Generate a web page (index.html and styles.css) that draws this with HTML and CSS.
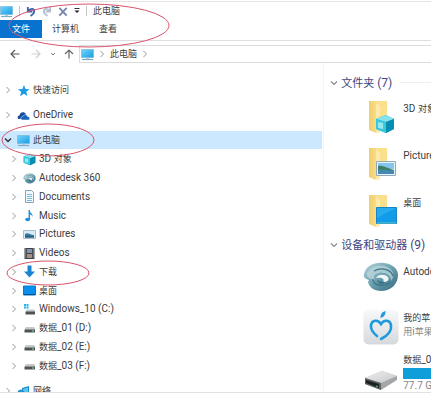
FILE: index.html
```
<!DOCTYPE html>
<html lang="zh-CN">
<head>
<meta charset="utf-8">
<title>此电脑</title>
<link rel="stylesheet" href="styles.css">
</head>
<body>
<svg class="defs" aria-hidden="true">
  <defs>
    <linearGradient id="screen" x1="0" y1="0" x2="1" y2="1"><stop offset="0" stop-color="#75d4fb"/><stop offset="1" stop-color="#149ee6"/></linearGradient>
    <linearGradient id="fold" x1="0" y1="0" x2="1" y2="0"><stop offset="0" stop-color="#f1cd69"/><stop offset="1" stop-color="#fbe398"/></linearGradient>
    <linearGradient id="swirl" x1="0" y1="0" x2="1" y2="1"><stop offset="0" stop-color="#b9d5dc"/><stop offset=".5" stop-color="#6a9fae"/><stop offset="1" stop-color="#316b80"/></linearGradient>
    <linearGradient id="metal" x1="0" y1="0" x2="1" y2="1"><stop offset="0" stop-color="#f0f0f0"/><stop offset="1" stop-color="#c4c6c7"/></linearGradient>
    <linearGradient id="plate" x1="0" y1="0" x2="0" y2="1"><stop offset="0" stop-color="#f8f9fa"/><stop offset="1" stop-color="#d6d9dc"/></linearGradient>
    <symbol id="chev" viewBox="0 0 6 8"><path d="M1.500 1 4.500 4l-3 3" fill="none" stroke="currentColor"/></symbol>
    <symbol id="down" viewBox="0 0 8 6"><path d="M1 1.500 4 4.500l3-3" fill="none" stroke="currentColor" stroke-width="1.200"/></symbol>
    <symbol id="pc" viewBox="0 0 13 13"><path d="M.5 1.500h12v8H.5z" fill="url(#screen)" stroke="#79b8d8" stroke-width=".7"/><path d="M1 11.500h11" stroke="#7fa9bf" stroke-width="1.200"/><path d="M5 10h3v1H5z" fill="#bcd"/></symbol>
    <symbol id="cube" viewBox="0 0 20 20"><path d="m1 5 10-4 8 4v10l-8 4-10-4z" fill="#17aecb"/><path d="m1 5 10-4 8 4-8 3z" fill="#86e3ee"/><path d="m1 5 10 3v11L1 15z" fill="#38c9dc"/><path d="m11 8 8-3v10l-8 4z" fill="#078eb4"/><path d="m3 8 5 1v6l-5-1z" fill="#b8f2f6" opacity=".75"/></symbol>
    <symbol id="orbit" viewBox="0 0 36 30"><path d="M1 12C3 3 12 0 21 1c9 1 14 6 14 12 0 9-7 16-17 16-7 0-12-4-13-9l1-2c-4-1-6-3-5-6z" fill="url(#swirl)"/><path d="M4 11C8 4 17 2 24 5c7 3 8 9 4 14 0-6-6-9-12-8-5 1-6 4-4 7-5-1-9-3-8-7z" fill="#c5dce1" opacity=".65"/><path d="M13 16c2-4 9-4 12-1 2 3-1 5-5 5 2-3-1-5-7-4z" fill="#f0f6f7"/><path d="M10 17c0 6 9 9 18 3M11 9c7-4 17-2 19 5" fill="none" stroke="#3c7588" stroke-width="1.300"/><path d="M14 18c3 2 6 1 8 2-1 3-7 3-8-2z" fill="#3c7588"/></symbol>
    <symbol id="drive" viewBox="0 0 13 13"><path d="m2 6 1-1h8l1 1v2H2z" fill="#c7c9c9"/><path d="M1.500 7.500h10.500v3H1.500z" fill="#4c5454"/><path d="M9 9h2" stroke="#85d897"/></symbol>
    <symbol id="folder" viewBox="0 0 26 36"><path d="M7 1h12v28H7z" fill="#fae08c"/><path d="M1 1h6l5 5v26l-4 1-7-3z" fill="url(#fold)"/><path d="m8 3 4 3v26l-4 1z" fill="#fff0b5" opacity=".7"/></symbol>
  </defs>
</svg>
<div class="window">
  <header class="title">
    <svg class="icon"><use href="#pc"/></svg>
    <span class="rule"></span>
    <button class="tool" aria-label="撤消"><svg viewBox="0 0 11 12"><path d="M2 1v5h5M2.500 5.500C5 2 9 2.500 9 6c0 2-2 3.500-4 5" fill="none" stroke="#3565ad" stroke-width="2"/></svg></button>
    <button class="tool" aria-label="恢复"><svg viewBox="0 0 11 12"><path d="M9 1v5H4M8.500 5.500C6 2 2 2.500 2 6c0 2 2 3.500 4 5" fill="none" stroke="#b3bfd0" stroke-width="2"/></svg></button>
    <button class="tool" aria-label="删除"><svg viewBox="0 0 11 12"><path d="m1.500 2 8 8.500m0-8.500-8 8.500" fill="none" stroke="#7485ac" stroke-width="2"/></svg></button>
    <button class="more" aria-label="自定义"><svg viewBox="0 0 6 6"><path d="M.5.5h5" stroke="#333"/><path d="M.5 2.500h5L3 5z" fill="#222"/></svg></button>
    <span class="rule"></span>
    <span class="zh">此电脑</span>
    <svg class="mark mark-top" viewBox="0 0 162 45"><ellipse cx="81" cy="22.500" rx="80" ry="21.500"/></svg>
  </header>
  <nav class="tabs zh">
    <button class="tab active">文件</button>
    <button class="tab">计算机</button>
    <button class="tab">查看</button>
  </nav>
  <div class="address">
    <div class="nav">
      <button aria-label="后退"><svg viewBox="0 0 10 10"><path d="M9.500 5H1m4-4L1 5l4 4" fill="none" stroke="#5d5d5d" stroke-width="1.200"/></svg></button>
      <button aria-label="前进"><svg viewBox="0 0 10 10"><path d="M.5 5H9M5 1l4 4-4 4" fill="none" stroke="#cfcfcf" stroke-width="1.200"/></svg></button>
      <button class="small" aria-label="最近的位置"><svg viewBox="0 0 8 6"><path d="m2 2 2 2 2-2" fill="none" stroke="#777"/></svg></button>
      <button aria-label="向上"><svg viewBox="0 0 10 10"><path d="M5 9.500V1M1 5l4-4 4 4" fill="none" stroke="#666" stroke-width="1.200"/></svg></button>
    </div>
    <div class="path zh">
      <svg class="icon"><use href="#pc"/></svg>
      <svg class="chev"><use href="#chev"/></svg>
      <a href="#pc-root">此电脑</a>
      <svg class="chev"><use href="#chev"/></svg>
    </div>
  </div>
  <main class="main">
    <nav class="side">
      <a class="row" href="#quick"><svg class="chev"><use href="#chev"/></svg><svg class="icon" viewBox="0 0 13 13"><path d="m7 1 1.500 4 4 .2-3.200 2.600 1 4.200L7 9.800l-4 2.400 1.200-4.300L1 5.200l4.300-.3z" fill="#1d9be6"/></svg><span class="zh">快速访问</span></a>
      <a class="row" href="#onedrive"><svg class="chev"><use href="#chev"/></svg><svg class="icon" viewBox="0 0 13 13"><path d="M1.500 10C0 9 .5 6.500 2.500 6.500 3 3 7 2 9 5v5z" fill="#174b9c"/><path d="M5 11c-2-1-1-3.500.8-3.500C7 5 10 5 10.500 7.500c2.500 0 3 3 1 3.500z" fill="#1763b5" stroke="#fff" stroke-width=".5"/></svg><span>OneDrive</span></a>
      <a class="row selected" id="pc-root" href="#pc-root"><svg class="chev open" viewBox="0 0 8 6"><path d="m1 1.500 3 3 3-3" fill="none" stroke="#333" stroke-width="1.500"/></svg><svg class="icon"><use href="#pc"/></svg><span class="zh">此电脑</span><svg class="mark mark-pc" viewBox="0 0 94 34"><ellipse cx="47" cy="17" rx="46" ry="16"/></svg></a>
      <div class="children">
        <a class="row" href="#3d"><svg class="chev"><use href="#chev"/></svg><svg class="icon"><use href="#cube"/></svg><span>3D <span class="zh">对象</span></span></a>
        <a class="row" href="#autodesk"><svg class="chev"><use href="#chev"/></svg><svg class="icon"><use href="#orbit"/></svg><span>Autodesk 360</span></a>
        <a class="row" href="#documents"><svg class="chev"><use href="#chev"/></svg><svg class="icon" viewBox="0 0 13 13"><path d="M2.500.5h6l2 2v10h-8z" fill="#eef8fd" stroke="#80a9c1"/><path d="M4 4.500h5M4 6.500h5M4 8.500h5M4 10.500h5" stroke="#62acd2" stroke-width=".8"/></svg><span>Documents</span></a>
        <a class="row" href="#music"><svg class="chev"><use href="#chev"/></svg><svg class="icon" viewBox="0 0 13 13"><path d="M6 1c1 3 4 3 3.500 7C9 6 7.500 5.500 7 5.500V10z" fill="#1a91df"/><path d="M6.300 1v9" stroke="#1a91df" stroke-width="1.400"/><ellipse cx="4.600" cy="10.500" rx="2.500" ry="1.800" fill="#1a91df"/></svg><span>Music</span></a>
        <a class="row" href="#pictures"><svg class="chev"><use href="#chev"/></svg><svg class="icon" viewBox="0 0 13 13"><path d="M.5 2.500h12v8H.5z" fill="#d6edf8" stroke="#a9bbc6"/><path d="M2 6c3-2 5 1 9 1v2.500H2z" fill="#397aa0"/><path d="M2 8c3-1 5 1 9 0v1.500H2z" fill="#275776"/></svg><span>Pictures</span></a>
        <a class="row" href="#videos"><svg class="chev"><use href="#chev"/></svg><svg class="icon" viewBox="0 0 13 13"><path d="M1.500 1h10v11h-10z" fill="#3c4149"/><path d="M4 2h5v4H4z" fill="#8293ad"/><path d="M4 7h5v4H4z" fill="#a38f83"/><path d="M2.700 1.500v10m7.600-10v10" stroke="#c3c7cc" stroke-dasharray="1 1"/></svg><span>Videos</span></a>
        <a class="row" href="#downloads"><svg class="chev"><use href="#chev"/></svg><svg class="icon" viewBox="0 0 13 13"><path d="M4.500.5h4v6h3.500L6.500 12.500 1 6.500h3.500z" fill="#1a83d2"/></svg><span class="zh">下载</span><svg class="mark mark-down" viewBox="0 0 84 26"><ellipse cx="42" cy="13" rx="41" ry="12"/></svg></a>
        <a class="row" href="#desktop"><svg class="chev"><use href="#chev"/></svg><svg class="icon" viewBox="0 0 13 13"><path d="M.5 2h12v9H.5z" fill="#0a8fec" stroke="#087acc"/><path d="M1 10.500h11" stroke="#064f91"/></svg><span class="zh">桌面</span></a>
        <a class="row" href="#c"><svg class="chev"><use href="#chev"/></svg><svg class="icon" viewBox="0 0 13 13"><path d="M1 1h2v2H1zm2.500 0h2v2h-2zM1 3.500h2v2H1zm2.500 0h2v2h-2z" fill="#26b6e8"/><path d="m3 7.500 1-1h7l1 1v2H3z" fill="#c7c9c9"/><path d="M2.500 8.500H12v3H2.500z" fill="#4c5454"/></svg><span>Windows_10 (C:)</span></a>
        <a class="row" href="#d"><svg class="chev"><use href="#chev"/></svg><svg class="icon"><use href="#drive"/></svg><span><span class="zh">数据</span>_01 (D:)</span></a>
        <a class="row" href="#e"><svg class="chev"><use href="#chev"/></svg><svg class="icon"><use href="#drive"/></svg><span><span class="zh">数据</span>_02 (E:)</span></a>
        <a class="row" href="#f"><svg class="chev"><use href="#chev"/></svg><svg class="icon"><use href="#drive"/></svg><span><span class="zh">数据</span>_03 (F:)</span></a>
      </div>
      <a class="row" href="#network"><svg class="chev"><use href="#chev"/></svg><svg class="icon" viewBox="0 0 13 13"><path d="m5 3 7-2v9l-7 2z" fill="#1a8ecb"/><path d="m6 4 5-1.500v6L6 10z" fill="#5bc5ef"/><circle cx="4" cy="8" r="3.500" fill="#2793c6"/></svg><span class="zh">网络</span></a>
    </nav>
    <section class="content">
      <h2><svg class="down"><use href="#down"/></svg><span><span class="zh-title">文件夹</span> (7)</span></h2>
      <div class="folders">
        <div class="tile"><svg class="pic" viewBox="0 0 36 36"><use href="#folder" x="5" width="26" height="36"/><use href="#cube" x="12" y="14" width="20" height="20"/></svg><span class="name">3D <span class="zh">对象</span></span></div>
        <div class="tile"><svg class="pic" viewBox="0 0 36 36"><use href="#folder" x="5" width="26" height="36"/><path d="M13.500 14.500h19v14h-19z" fill="#e8f4fb" stroke="#91a9b9"/><path d="M15 16h16v6H15z" fill="#86c6ee"/><path d="M15 19c5-1 8 2 16 4v2H15z" fill="#3b8065"/><path d="M15 23c6-1 11 1 16 0v4H15z" fill="#4589ad"/></svg><span class="name">Pictures</span></div>
        <div class="tile"><svg class="pic" viewBox="0 0 36 36"><use href="#folder" x="5" width="26" height="36"/><path d="M13.500 13.500h20v16h-20z" fill="#109ce8" stroke="#1785c2"/><path d="m14 14 19 0-19 10z" fill="#38b4f4" opacity=".6"/><path d="M14 29h19" stroke="#69c8c9"/></svg><span class="name zh">桌面</span></div>
      </div>
      <h2><svg class="down"><use href="#down"/></svg><span><span class="zh-title">设备和驱动器</span> (9)</span></h2>
      <div class="devices">
        <div class="tile"><svg class="pic" viewBox="0 0 36 36"><use href="#orbit" y="3" width="36" height="30"/></svg><span class="name">Autodesk 360</span></div>
        <div class="tile"><svg class="pic" viewBox="0 0 36 36"><rect x=".5" y=".5" width="35" height="35" rx="5" fill="url(#plate)"/><path d="M14 27C9 23 7.500 20 8 16c1-5 7-6 10-1 3-5 9-4 10 1 1 6-4 11-10 14" fill="none" stroke="#1d9bdd" stroke-width="2.600" stroke-linecap="round"/><path d="M17.500 9c0-4 1.500-6 5-7 0 4-1.500 6-5 7z" fill="#1d9bdd"/></svg><div><span class="name zh">我的苹果</span><span class="note"><span class="zh">用</span>i<span class="zh">苹果助手</span></span></div></div>
        <div class="tile"><svg class="pic" viewBox="0 0 36 36"><path d="m2 19 17-7 15 5v4l-16 10-16-6z" fill="#a4a7a7"/><path d="m2 19 17-7 15 5-16 7z" fill="url(#metal)"/><path d="m2 19 16 5v7L2 25z" fill="#5c6060"/><path d="m3 21 13 4v4L3 24z" fill="#1b2020"/><path d="m13 27 2 .5" stroke="#70cf85"/></svg><div><span class="name"><span class="zh">数据</span>_02 (E:)</span><div class="bar"></div><span class="note">77.7 GB</span></div></div>
      </div>
    </section>
  </main>
</div>
</body>
</html>
```
FILE: styles.css
```
* { box-sizing: border-box; }

body {
  margin: 0;
  background: #fff;
  color: #3c3c3c;
  font: 10px/14px Roboto, "Noto Sans CJK SC", sans-serif;
  overflow: hidden;
}

svg { display: block; flex: none; }
a { color: inherit; text-decoration: none; }

button {
  padding: 0;
  border: 0;
  background: none;
  color: inherit;
  font: inherit;
}

.defs { position: absolute; width: 0; height: 0; }
.zh { font-family: "Noto Sans CJK SC", sans-serif; font-size: 9px; }
.zh-title { font-family: "Noto Sans CJK SC", sans-serif; font-size: 11px; }
.icon { width: 13px; height: 13px; }
.chev { width: 6px; height: 8px; color: #989898; }

.window {
  display: flex;
  flex-direction: column;
  height: calc(100vh - 10px);
  padding-top: 1px;
  border-bottom: 1px solid #e2e2e2;
}

.title {
  position: relative;
  display: flex;
  align-items: center;
  gap: 6px;
  height: 19px;
  border-top: 1px solid #e4e4e4;
}

.rule { width: 1px; height: 10px; background: #c4c4c4; }
.tool svg { width: 10px; height: 11px; }
.more svg { width: 6px; height: 6px; }

.tabs {
  display: flex;
  height: 21px;
  padding-bottom: 2px;
  border-bottom: 1px solid #dedede;
}

.tab { padding: 0 10px; }
.tab.active { padding: 0 12px; background: #0873cf; color: #fff; }

.address { display: flex; height: 22px; padding-top: 4px; }

.nav {
  display: flex;
  align-items: center;
  gap: 11px;
  width: 79px;
  padding-left: 10px;
}

.nav svg { width: 10px; height: 10px; }
.nav .small { margin: 0 -4px 0 -3px; }
.nav .small svg { width: 8px; height: 6px; }

.path {
  display: flex;
  flex: 1;
  align-items: center;
  gap: 5px;
  padding-left: 1px;
  border: 1px solid #dcdcdc;
  border-right: 0;
}

.main {
  display: grid;
  grid-template-columns: 3fr 1fr;
  flex: 1;
  min-height: 0;
  overflow: hidden;
}

.side {
  display: flex;
  flex-direction: column;
  gap: 7px;
  min-width: 0;
  padding: 18px 1px 0 0;
}

.row {
  position: relative;
  display: flex;
  flex: none;
  align-items: center;
  gap: 3px;
  height: 18px;
  padding-left: 5px;
}

.row .chev { margin-right: 3px; }
.row .open { width: 8px; height: 6px; margin: 0 2px 0 -1px; }
.selected { background: #cce8ff; }

.children {
  display: grid;
  flex: none;
  grid-template-rows: repeat(12, 1fr);
  height: 225px;
  margin-top: -6px;
  padding-left: 6px;
}

.children .row { height: auto; }

.mark {
  position: absolute;
  z-index: 1;
  fill: none;
  stroke: #d9536b;
  stroke-width: 1;
  pointer-events: none;
}

.mark-top { left: 8px; top: 1px; width: 162px; height: 45px; }
.mark-pc { left: 1px; top: -8px; width: 94px; height: 34px; }
.mark-down { left: 0; top: -3px; width: 84px; height: 26px; }

.content {
  min-width: 0;
  padding: 11px 0 0 6px;
  border-left: 1px solid #f4f4f4;
  overflow: hidden;
  white-space: nowrap;
}

h2 {
  display: flex;
  align-items: center;
  gap: 3px;
  margin: 0;
  color: #3e4581;
  font-size: 12px;
  font-weight: 400;
  line-height: 16px;
}

h2::after { flex: 1; height: 1px; margin-left: 4px; background: #eee; content: ""; }
.down { width: 8px; height: 6px; color: #888; }

.tile { display: flex; gap: 4px; padding-left: 33px; }
.pic { width: 36px; height: 36px; }
.folders { display: grid; gap: 11px; padding: 9px 0 6px; }
.folders .name { padding-top: 2px; }
.devices { display: grid; gap: 8px; padding-top: 6px; }
.devices .tile:first-child { padding-bottom: 6px; }
.devices .tile:first-child .name { padding-top: 6px; }
.devices .tile:nth-child(2) .name { padding-top: 2px; }
.devices .tile:last-child .pic { margin-top: 6px; }
.name, .note { display: block; }
.note { color: #858585; }
.bar { width: 90px; height: 11px; margin-top: 1px; background: #109edb; }
```
